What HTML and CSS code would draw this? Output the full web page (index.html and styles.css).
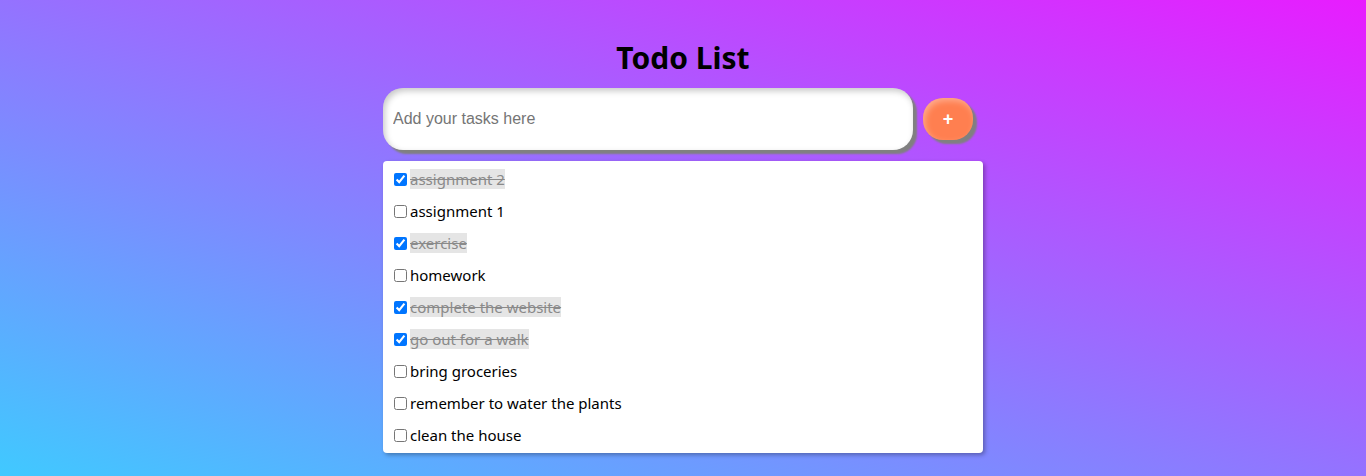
FILE: index.html
```html
<!DOCTYPE html>
<html>
<head>
<meta charset="utf-8">
<link rel="stylesheet" href="styles.css">
</head>
<body>
<div class="app">
  <h1 class="title">Todo List</h1>
  <div class="entry">
    <input class="task-input" type="text" placeholder="Add your tasks here">
    <button class="add-btn">+</button>
  </div>
  <ul class="list">
    <li class="item"><input type="checkbox" checked><span class="text done">assignment 2</span></li>
    <li class="item"><input type="checkbox"><span class="text">assignment 1</span></li>
    <li class="item"><input type="checkbox" checked><span class="text done">exercise</span></li>
    <li class="item"><input type="checkbox"><span class="text">homework</span></li>
    <li class="item"><input type="checkbox" checked><span class="text done">complete the website</span></li>
    <li class="item"><input type="checkbox" checked><span class="text done">go out for a walk</span></li>
    <li class="item"><input type="checkbox"><span class="text">bring groceries</span></li>
    <li class="item"><input type="checkbox"><span class="text">remember to water the plants</span></li>
    <li class="item"><input type="checkbox"><span class="text">clean the house</span></li>
  </ul>
</div>
</body>
</html>
```
FILE: styles.css
```css
html, body {
  margin: 0;
  height: 100%;
}
body {
  background: linear-gradient(to top right, #40c9ff, #e81cff);
  font-family: "Noto Sans", "Open Sans", sans-serif;
  overflow: hidden;
}
.app {
  width: 600px;
  margin: 0 auto;
  display: flex;
  flex-direction: column;
}
.title {
  margin: 38px 0 10px;
  text-align: center;
  font-size: 30px;
  line-height: 40px;
  font-weight: 700;
  color: #000;
}
.entry {
  display: flex;
  align-items: center;
  gap: 10px;
}
.task-input {
  width: 530px;
  height: 62px;
  box-sizing: border-box;
  border: none;
  outline: none;
  border-radius: 20px;
  padding: 0 10px;
  font-family: "Liberation Sans", Arial, sans-serif;
  font-size: 16px;
  background: #fff;
  box-shadow: inset 2px 3px 6px rgba(0,0,0,0.22), 4px 4px 2px #808080;
}
.task-input::placeholder {
  color: #757575;
}
.add-btn {
  width: 50px;
  height: 42px;
  border: none;
  border-radius: 20px;
  background: #ff7f50;
  color: #fff;
  font-family: "Liberation Sans", Arial, sans-serif;
  font-size: 18px;
  font-weight: 700;
  box-shadow: inset 2px 3px 6px rgba(255,255,255,0.35), 4px 4px 2px #808080;
  padding: 0;
}
.list {
  list-style: none;
  margin: 11px 0 0;
  padding: 2px 0;
  background: #fff;
  border-radius: 4px;
  box-shadow: 2px 2px 4px rgba(0,0,0,0.3);
}
.item {
  height: 32px;
  display: flex;
  align-items: center;
  padding-left: 7px;
  font-size: 15px;
  color: #000;
}
.item input {
  width: 13px;
  height: 13px;
  margin: 0 3px 0 4px;
}
.text.done {
  background: #e5e5e5;
  color: #8a8a8a;
  text-decoration: line-through;
}
```
